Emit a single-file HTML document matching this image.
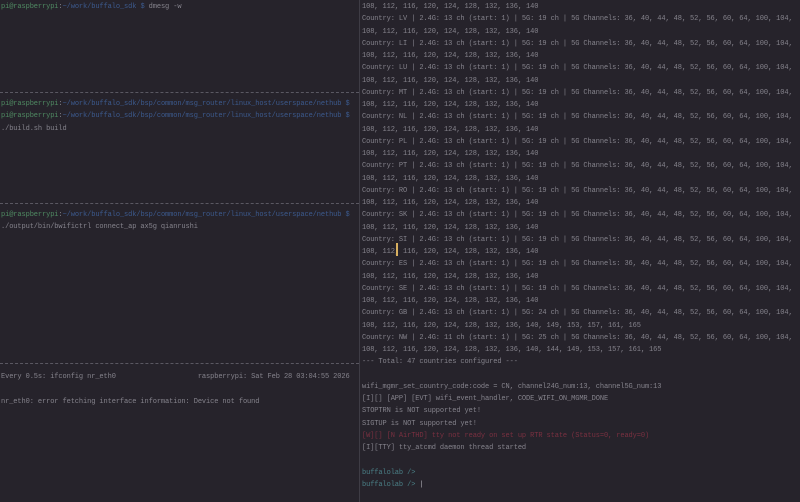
<!DOCTYPE html>
<html><head><style>
html,body{margin:0;padding:0;background:#26232b;width:800px;height:502px;overflow:hidden}
.p{position:absolute;font-family:"Liberation Mono",monospace;font-size:7px;letter-spacing:-0.1px;line-height:12.25px;color:#85838c;white-space:pre}
.g{color:#4f8a62}.b{color:#3c5a8e}.r{color:#7a3040}.t{color:#4a7f86}
.sep{position:absolute;left:0;width:359px;height:0;border-top:1px dashed #5a5862}
.vl{position:absolute;left:359px;top:0;width:1px;height:502px;background:#3e3c45}
</style></head><body>
<div class="vl"></div>
<div class="p" style="left:1px;top:1px"><span class="g">pi@raspberrypi</span>:<span class="b">~/work/buffalo_sdk $</span> dmesg -w</div>
<div class="sep" style="top:92px"></div>
<div class="p" style="left:1px;top:98px"><span class="g">pi@raspberrypi</span>:<span class="b">~/work/buffalo_sdk/bsp/common/msg_router/linux_host/userspace/nethub $</span>
<span class="g">pi@raspberrypi</span>:<span class="b">~/work/buffalo_sdk/bsp/common/msg_router/linux_host/userspace/nethub $</span>
./build.sh build</div>
<div class="sep" style="top:203px"></div>
<div class="p" style="left:1px;top:209px"><span class="g">pi@raspberrypi</span>:<span class="b">~/work/buffalo_sdk/bsp/common/msg_router/linux_host/userspace/nethub $</span>
./output/bin/bwifictrl connect_ap ax5g qianrushi</div>
<div class="sep" style="top:363px"></div>
<div class="p" style="left:1px;top:371px">Every 0.5s: ifconfig nr_eth0                    raspberrypi: Sat Feb 28 03:04:55 2026

nr_eth0: error fetching interface information: Device not found</div>
<div class="p" style="left:362px;top:1px">108, 112, 116, 120, 124, 128, 132, 136, 140
Country: LV | 2.4G: 13 ch (start: 1) | 5G: 19 ch | 5G Channels: 36, 40, 44, 48, 52, 56, 60, 64, 100, 104,
108, 112, 116, 120, 124, 128, 132, 136, 140
Country: LI | 2.4G: 13 ch (start: 1) | 5G: 19 ch | 5G Channels: 36, 40, 44, 48, 52, 56, 60, 64, 100, 104,
108, 112, 116, 120, 124, 128, 132, 136, 140
Country: LU | 2.4G: 13 ch (start: 1) | 5G: 19 ch | 5G Channels: 36, 40, 44, 48, 52, 56, 60, 64, 100, 104,
108, 112, 116, 120, 124, 128, 132, 136, 140
Country: MT | 2.4G: 13 ch (start: 1) | 5G: 19 ch | 5G Channels: 36, 40, 44, 48, 52, 56, 60, 64, 100, 104,
108, 112, 116, 120, 124, 128, 132, 136, 140
Country: NL | 2.4G: 13 ch (start: 1) | 5G: 19 ch | 5G Channels: 36, 40, 44, 48, 52, 56, 60, 64, 100, 104,
108, 112, 116, 120, 124, 128, 132, 136, 140
Country: PL | 2.4G: 13 ch (start: 1) | 5G: 19 ch | 5G Channels: 36, 40, 44, 48, 52, 56, 60, 64, 100, 104,
108, 112, 116, 120, 124, 128, 132, 136, 140
Country: PT | 2.4G: 13 ch (start: 1) | 5G: 19 ch | 5G Channels: 36, 40, 44, 48, 52, 56, 60, 64, 100, 104,
108, 112, 116, 120, 124, 128, 132, 136, 140
Country: RO | 2.4G: 13 ch (start: 1) | 5G: 19 ch | 5G Channels: 36, 40, 44, 48, 52, 56, 60, 64, 100, 104,
108, 112, 116, 120, 124, 128, 132, 136, 140
Country: SK | 2.4G: 13 ch (start: 1) | 5G: 19 ch | 5G Channels: 36, 40, 44, 48, 52, 56, 60, 64, 100, 104,
108, 112, 116, 120, 124, 128, 132, 136, 140
Country: SI | 2.4G: 13 ch (start: 1) | 5G: 19 ch | 5G Channels: 36, 40, 44, 48, 52, 56, 60, 64, 100, 104,
108, 112, 116, 120, 124, 128, 132, 136, 140
Country: ES | 2.4G: 13 ch (start: 1) | 5G: 19 ch | 5G Channels: 36, 40, 44, 48, 52, 56, 60, 64, 100, 104,
108, 112, 116, 120, 124, 128, 132, 136, 140
Country: SE | 2.4G: 13 ch (start: 1) | 5G: 19 ch | 5G Channels: 36, 40, 44, 48, 52, 56, 60, 64, 100, 104,
108, 112, 116, 120, 124, 128, 132, 136, 140
Country: GB | 2.4G: 13 ch (start: 1) | 5G: 24 ch | 5G Channels: 36, 40, 44, 48, 52, 56, 60, 64, 100, 104,
108, 112, 116, 120, 124, 128, 132, 136, 140, 149, 153, 157, 161, 165
Country: NW | 2.4G: 11 ch (start: 1) | 5G: 25 ch | 5G Channels: 36, 40, 44, 48, 52, 56, 60, 64, 100, 104,
108, 112, 116, 120, 124, 128, 132, 136, 140, 144, 149, 153, 157, 161, 165
--- Total: 47 countries configured ---

wifi_mgmr_set_country_code:code = CN, channel24G_num:13, channel5G_num:13
[I][] [APP] [EVT] wifi_event_handler, CODE_WIFI_ON_MGMR_DONE
STOPTRN is NOT supported yet!
SIGTUP is NOT supported yet!
<span class="r">[W][] [N AirTHD] tty not ready on set up RTR state (Status=0, ready=0)</span>
[I][TTY] tty_atcmd daemon thread started

<span class="t">buffalolab /></span>
<span class="t">buffalolab /></span> <span style="color:#b0aeb6">|</span></div>
<div style="position:absolute;left:396px;top:243px;width:2px;height:13px;background:#d8b060"></div>
</body></html>
